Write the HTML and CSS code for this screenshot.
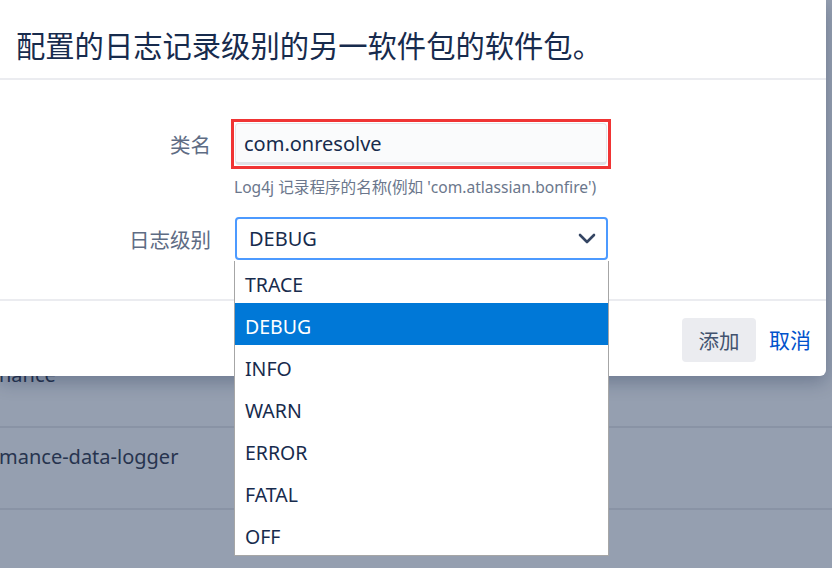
FILE: index.html
```html
<!DOCTYPE html>
<html lang="zh">

<head>
    <meta charset="UTF-8">
    <meta name="viewport" content="width=device-width, initial-scale=1.0">
    <title>日志记录级别</title>
    <link rel="stylesheet" href="styles.css">
</head>

<body>
    <div class="page">
        <div class="row">nance</div>
        <div class="row">mance-data-logger</div>
        <div class="row"></div>
    </div>

    <section class="dialog">
        <header class="dialog-header">
            <h2>配置的日志记录级别的另一软件包的软件包。</h2>
        </header>
        <div class="dialog-body">
            <label class="field-label" for="logger">类名</label>
            <div class="control">
                <div class="focus-ring">
                    <input class="text-input" type="text" id="logger" value="com.onresolve">
                </div>
                <div class="hint">Log4j 记录程序的名称(例如 'com.atlassian.bonfire')</div>
            </div>
            <label class="field-label">日志级别</label>
            <div class="control">
                <div class="select">
                    <span>DEBUG</span>
                    <svg width="18" height="11" viewBox="0 0 18 11">
                        <path d="M2 2 L9 9 L16 2" fill="none" stroke="#344563" stroke-width="2.6" stroke-linecap="round" stroke-linejoin="round"/>
                    </svg>
                </div>
            </div>
        </div>
        <footer class="dialog-footer">
            <button class="btn">添加</button>
            <a class="link" href="#">取消</a>
        </footer>
    </section>

    <ul class="dropdown">
        <li>TRACE</li>
        <li class="selected">DEBUG</li>
        <li>INFO</li>
        <li>WARN</li>
        <li>ERROR</li>
        <li>FATAL</li>
        <li>OFF</li>
    </ul>
</body>

</html>
```

FILE: styles.css
```css
body {
    margin: 0;
    height: 568px;
    overflow: hidden;
    background-color: #959fb0;
    font-family: "Noto Sans", "Noto Sans CJK SC", sans-serif;
    color: #172b4d;
}

.page {
    padding-top: 346px;
}

.row {
    height: 80px;
    border-bottom: 2px solid #8993a5;
    font-size: 20px;
    line-height: 58px;
    color: #27344f;
    margin-left: -1px;
}

.dialog {
    position: absolute;
    top: 0;
    left: 0;
    width: 826px;
    background: #fff;
    border-radius: 0 0 6px 0;
    box-shadow: 0 6px 18px rgba(9, 30, 66, 0.28);
}

.dialog-header {
    height: 78px;
    border-bottom: 2px solid #ebecf0;
    padding-left: 16px;
    display: flex;
    align-items: center;
}

.dialog-header h2 {
    margin: 0;
    font-size: 29.3px;
    font-weight: 400;
    color: #172b4d;
    padding-top: 9px;
    font-family: "Noto Sans CJK SC", sans-serif;
}

.dialog-body {
    display: grid;
    grid-template-columns: 211px 374px;
    column-gap: 23px;
    row-gap: 20px;
    padding: 42px 0 38px;
    border-bottom: 2px solid #ebecf0;
}

.field-label {
    text-align: right;
    font-size: 20.5px;
    color: #5e6c84;
    line-height: 44px;
    font-family: "Noto Sans CJK SC", sans-serif;
}

.control {
    display: flex;
    flex-direction: column;
}

.focus-ring {
    margin: -3px -3px 0 -3px;
    border: 3px solid #f03434;
    padding: 1px;
}

.text-input {
    box-sizing: border-box;
    display: block;
    height: 42px;
    width: 100%;
    margin: 0;
    padding: 0 8px;
    border: 1px solid #e4e6ea;
    border-bottom: 3px solid #dfe1e6;
    border-radius: 4px;
    background: #fafbfc;
    font-family: inherit;
    font-size: 20px;
    color: #172b4d;
    outline: none;
}

.hint {
    margin-top: 8px;
    font-size: 15.6px;
    line-height: 20px;
    color: #6b778c;
}

.select {
    box-sizing: border-box;
    height: 43px;
    margin-left: 1px;
    border: 2px solid #4c9aff;
    border-radius: 4px;
    display: flex;
    align-items: center;
    justify-content: space-between;
    padding: 0 10px 0 12px;
    font-size: 20px;
    color: #172b4d;
}

.dialog-footer {
    height: 75px;
    display: flex;
    align-items: center;
    justify-content: flex-end;
    gap: 13px;
    padding-right: 15px;
}

.btn {
    height: 44px;
    width: 74px;
    border: none;
    border-radius: 4px;
    background: #ebecf0;
    color: #42526e;
    font-size: 20.5px;
    font-family: "Noto Sans CJK SC", sans-serif;
    margin-top: 3px;
}

.link {
    color: #0052cc;
    text-decoration: none;
    font-size: 21px;
    font-family: "Noto Sans CJK SC", sans-serif;
}

.dropdown {
    position: absolute;
    top: 261px;
    left: 234px;
    width: 373px;
    margin: 0;
    padding: 0;
    list-style: none;
    background: #fff;
    border: 1px solid #a6a6a6;
    border-top: none;
}

.dropdown li {
    height: 42px;
    line-height: 47px;
    padding-left: 10px;
    font-size: 19.5px;
    color: #172b4d;
}

.dropdown li.selected {
    background: #0078d7;
    color: #fff;
}
```
